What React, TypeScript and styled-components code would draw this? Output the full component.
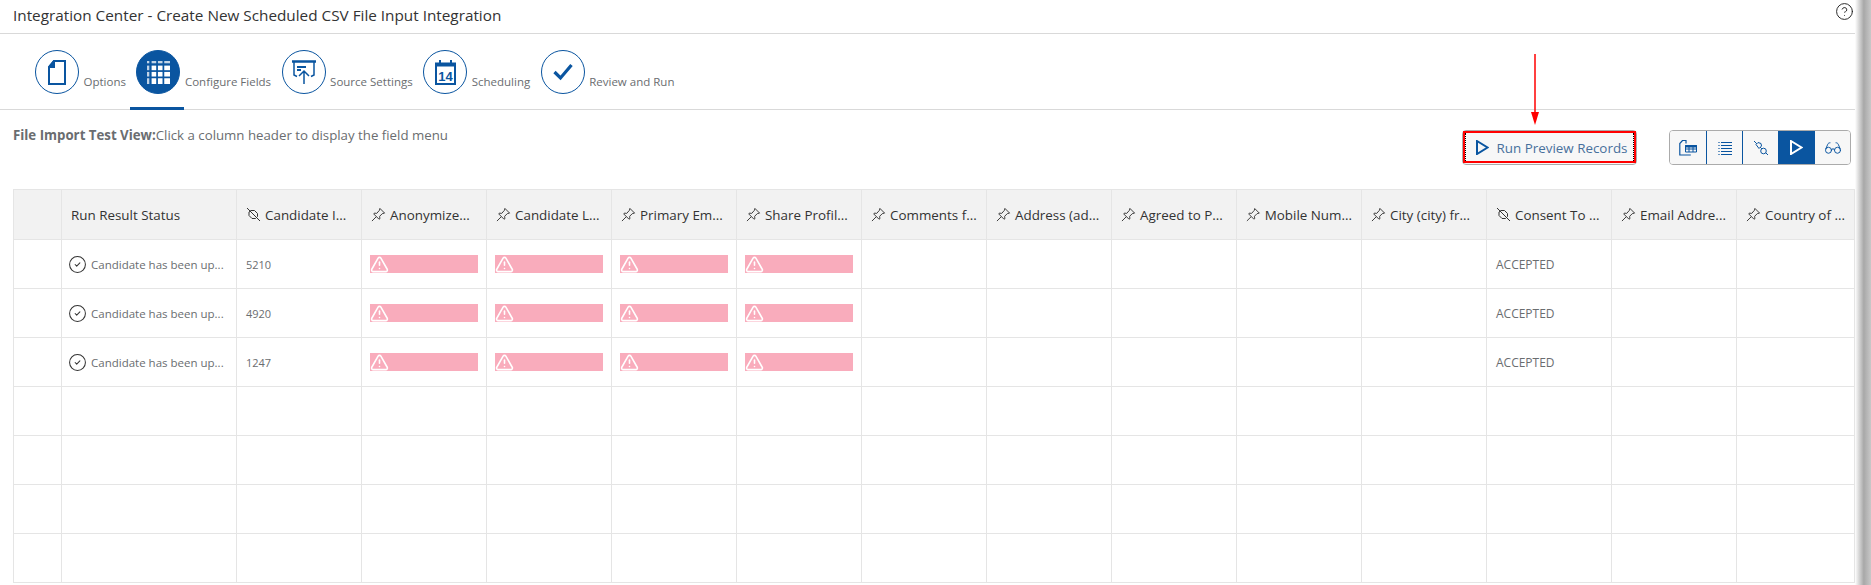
import React from 'react';
import styled, { createGlobalStyle } from 'styled-components';
import { CircleCheck, CircleHelp, Glasses, TriangleAlert } from 'lucide-react';

const FONT = '"Open Sans", "Liberation Sans", sans-serif';
const BLUE = '#0a55a0';
const GRID = '#e5e5e5';

const GlobalStyle = createGlobalStyle`
  html, body {
    margin: 0;
    height: 100%;
    overflow: hidden;
    background: #fff;
    font-family: ${FONT};
  }
`;

const Page = styled.div`
  position: relative;
  width: 1871px;
  height: 585px;
  overflow: hidden;
`;

const TitleBar = styled.header`
  box-sizing: border-box;
  height: 34px;
  padding: 0 15px 0 13px;
  display: flex;
  align-items: center;
  justify-content: space-between;
  border-bottom: 1px solid #d9d9d9;
`;

const Title = styled.h1`
  margin: 0 0 4px;
  font-size: 15.3px;
  font-weight: 400;
  color: #333;
`;

const HelpButton = styled.span`
  display: flex;
  color: #222;
  margin: 0 2px 10px 0;
`;

const Tabs = styled.nav`
  box-sizing: border-box;
  height: 76px;
  padding: 16px 0 0 35px;
  display: flex;
  gap: 10.5px;
  border-bottom: 1px solid #d9d9d9;
`;

const Tab = styled.div<{ $active?: boolean }>`
  position: relative;
  display: flex;
  align-items: flex-start;
  gap: 4.5px;
  height: 44px;

  ${(p) =>
    p.$active &&
    `
    &::after {
      content: '';
      position: absolute;
      left: -6px;
      width: 54px;
      top: 57px;
      height: 3px;
      background: ${BLUE};
    }
  `}
`;

const TabCircle = styled.span<{ $active?: boolean }>`
  box-sizing: border-box;
  width: 44px;
  height: 44px;
  border-radius: 50%;
  border: 1px solid ${BLUE};
  background: ${(p) => (p.$active ? BLUE : '#fff')};
  color: ${(p) => (p.$active ? '#fff' : BLUE)};
  display: flex;
  align-items: center;
  justify-content: center;
`;

const TabLabel = styled.span`
  margin-top: 24px;
  font-size: 11.5px;
  line-height: 16px;
  color: #6a6d70;
  white-space: nowrap;
`;

const Toolbar = styled.div`
  box-sizing: border-box;
  height: 79px;
  padding: 16px 20px 0 13px;
  display: flex;
  justify-content: space-between;
`;

const Hint = styled.p`
  margin: 0;
  font-size: 13.25px;
  line-height: 18px;
  color: #6a6d70;

  b {
    font-weight: 700;
  }
`;

const Actions = styled.div`
  display: flex;
  gap: 32px;
  margin-top: 4px;
  height: 35px;
`;

const RunButton = styled.button`
  position: relative;
  box-sizing: border-box;
  width: 175px;
  height: 35px;
  display: flex;
  align-items: center;
  justify-content: center;
  gap: 8px;
  padding: 0 0 0 4px;
  border: 1px solid #ababab;
  border-radius: 4px;
  background: #f7f7f7;
  color: #47709c;
  font-family: inherit;
  font-size: 13.4px;

  /* red annotation frame drawn on top of the screenshot */
  &::before {
    content: '';
    position: absolute;
    inset: 0 0 1px 0;
    border: 2px solid #f00;
  }

  /* focus dots, only visible at the button sides */
  &::after {
    content: '';
    position: absolute;
    top: 2px;
    bottom: 3px;
    left: 2px;
    right: 2px;
    border-left: 1px dotted #000;
    border-right: 1px dotted #000;
  }
`;

const Arrow = styled.svg`
  position: absolute;
  left: 66px;
  bottom: 38px;
`;

const Segments = styled.div`
  display: flex;
  height: 35px;
  box-sizing: border-box;
  border: 1px solid #ababab;
  border-radius: 4px;
  overflow: hidden;
`;

const Segment = styled.span<{ $active?: boolean }>`
  box-sizing: border-box;
  width: 36px;
  display: flex;
  align-items: center;
  justify-content: center;
  background: ${(p) => (p.$active ? BLUE : '#f7f7f7')};
  color: ${(p) => (p.$active ? '#fff' : BLUE)};

  & + & {
    border-left: 1px solid ${(p) => (p.$active ? BLUE : '#ababab')};
  }
`;

const TableWrap = styled.div`
  padding-left: 13px;
  width: 1841px;
`;

const Table = styled.table`
  width: 1841px;
  table-layout: fixed;
  border-collapse: collapse;
  font-size: 11px;
  color: #6a6d70;

  th, td {
    box-sizing: border-box;
    border: 1px solid ${GRID};
    padding: 0 9px;
    overflow: hidden;
    white-space: nowrap;
  }
`;

const HeadRow = styled.tr`
  height: 50px;
  background: #f2f2f2;
`;

const BodyRow = styled.tr`
  height: 49px;
`;

const HeadCell = styled.th`
  font-size: 13.4px;
  font-weight: 400;
  color: #333;
  text-align: left;
`;

const HeadInner = styled.span`
  display: flex;
  align-items: center;
  gap: 4px;
`;

const StatusCell = styled.span`
  display: flex;
  align-items: center;
  gap: 4px;
  margin-left: -3px;
  font-size: 11.5px;
`;

const ValueText = styled.span`
  font-size: 12px;
`;

const ErrorBar = styled.div`
  height: 18px;
  margin: 0 -1px;
  background: #f9acbc;
  color: #fff;
  display: flex;
  align-items: center;

  svg {
    flex-shrink: 0;
  }
`;

const EdgeShadow = styled.div`
  position: absolute;
  top: 0;
  right: 0;
  bottom: 0;
  width: 16px;
  background: linear-gradient(to right, #fff, #a8a8a8 55%, #c8c8c8);
`;

const PinIcon = () => (
  <svg width="15" height="15" viewBox="0 0 16 16" fill="none" stroke="#333" strokeWidth="1">
    <path d="M9.5 1.5l5 5-2.5.6-2.8 2.8.3 2.6-1 .5-5.5-5.5.5-1 2.6.3L9 3.5z" />
    <path d="M5.5 10.5L1 15" />
  </svg>
);

const UnpinIcon = () => (
  <svg width="15" height="15" viewBox="0 0 15 15" fill="none" stroke="#333" strokeWidth="1">
    <path d="M1 1l13 13" />
    <path d="M5 3.5h3.5l3 3v3l-2 2H6l-3-3V5z" />
  </svg>
);

const PlayIcon = ({ color }: { color: string }) => (
  <svg width="13" height="15" viewBox="0 0 13 15">
    <path d="M1 1l10.5 6.5L1 14z" fill="none" stroke={color} strokeWidth="2" />
  </svg>
);

const DocumentIcon = () => (
  <svg width="18" height="25" viewBox="0 0 18 25" fill="none" stroke="currentColor" strokeWidth="2">
    <path d="M6 1h11v23H1V7z" />
    <path d="M6 1v6H1z" fill="currentColor" />
  </svg>
);

const TABLE_COLS = [
  { x: 0, w: 2 },
  { x: 4, w: 4 },
  { x: 9.5, w: 4 },
  { x: 15, w: 5 },
];

const TABLE_ROWS = [
  { y: 0, h: 2 },
  { y: 4, h: 4 },
  { y: 9.5, h: 4 },
  { y: 15, h: 5 },
];

const TableIcon = () => (
  <svg width="23" height="23" viewBox="0 0 20 20" fill="currentColor">
    {TABLE_ROWS.flatMap((r) =>
      TABLE_COLS.map((c) => (
        <rect
          key={`${r.y}-${c.x}`}
          x={c.x}
          y={r.y}
          width={c.w}
          height={r.h}
          opacity={r.y === 0 || c.x === 0 ? 0.75 : 1}
        />
      )),
    )}
  </svg>
);

const UploadIcon = () => (
  <svg width="24" height="24" viewBox="0 0 24 24" fill="none" stroke="currentColor" strokeWidth="1.5">
    <path d="M0 1.5h24" strokeWidth="2.5" />
    <path d="M2 2v13l3 1.5M22 2v13l-3 1.5" />
    <path d="M5 7h9M5 10h4" strokeWidth="1.8" />
    <path d="M12 24V11M7 16l5-5 5 5" />
  </svg>
);

const CalendarIcon = () => (
  <svg width="21" height="25" viewBox="0 0 21 25">
    <path d="M1 3.5h19V24H1z" fill="none" stroke="currentColor" strokeWidth="2" />
    <path d="M1 3h19v3.5H1zM4 0h2v5H4zM15 0h2v5h-2z" fill="currentColor" />
    <text x="10.5" y="21" textAnchor="middle" fontSize="13" fontWeight="700" fontFamily="Liberation Sans, sans-serif" fill="currentColor">
      14
    </text>
  </svg>
);

const CheckIcon = () => (
  <svg width="20" height="18" viewBox="0 0 20 18" fill="none" stroke="currentColor" strokeWidth="3.2">
    <path d="M1.5 9l6 6L18.5 2" />
  </svg>
);

const FileTableIcon = () => (
  <svg width="18" height="16" viewBox="0 0 18 16" fill="none" stroke="currentColor" strokeWidth="1">
    <path d="M7 3.5V.5H3.5L.8 3.5V15h11" strokeWidth="1.2" />
    <path d="M6.5 5.5h11V12h-11zM6.500 9h11M10 5.500V12M14 5.500V12" />
    <path d="M6.5 5.5h11V7h-11z" fill="currentColor" />
  </svg>
);

const ListIcon = () => (
  <svg width="14" height="14" viewBox="0 0 14 14" stroke="currentColor" strokeWidth="1">
    {[1, 4, 7, 10, 13].map((y) => (
      <g key={y}>
        <path d={`M0 ${y + 0.5}h2`} opacity="0.6" />
        <path d={`M3 ${y + 0.5}h11`} />
      </g>
    ))}
  </svg>
);

const PlugIcon = () => (
  <svg width="16" height="16" viewBox="0 0 16 16" fill="none" stroke="currentColor" strokeWidth="1">
    <path d="M1 1l14 14" />
    <path d="M3 4.5l2-2 3 1 .5 2.5L6 8.5z" fill="#f7f7f7" />
    <circle cx="10.5" cy="11" r="2.8" fill="#f7f7f7" />
  </svg>
);

const TAB_ITEMS = [
  { label: 'Options', icon: <DocumentIcon /> },
  { label: 'Configure Fields', icon: <TableIcon />, active: true },
  { label: 'Source Settings', icon: <UploadIcon /> },
  { label: 'Scheduling', icon: <CalendarIcon /> },
  { label: 'Review and Run', icon: <CheckIcon /> },
];

const COLUMNS = [
  { title: 'Candidate I...', pinned: false },
  { title: 'Anonymize...', pinned: true, error: true },
  { title: 'Candidate L...', pinned: true, error: true },
  { title: 'Primary Em...', pinned: true, error: true },
  { title: 'Share Profil...', pinned: true, error: true },
  { title: 'Comments f...', pinned: true },
  { title: 'Address (ad...', pinned: true },
  { title: 'Agreed to P...', pinned: true },
  { title: 'Mobile Num...', pinned: true },
  { title: 'City (city) fr...', pinned: true },
  { title: 'Consent To ...', pinned: false, text: 'ACCEPTED' },
  { title: 'Email Addre...', pinned: true },
  { title: 'Country of ...', pinned: true, width: 118 },
];

const ROWS = ['5210', '4920', '1247', null, null, null, null];

const App = () => (
  <Page>
    <GlobalStyle />
    <TitleBar>
      <Title>Integration Center - Create New Scheduled CSV File Input Integration</Title>
      <HelpButton>
        <CircleHelp size={19} strokeWidth={1.2} />
      </HelpButton>
    </TitleBar>

    <Tabs>
      {TAB_ITEMS.map((t) => (
        <Tab key={t.label} $active={t.active}>
          <TabCircle $active={t.active}>{t.icon}</TabCircle>
          <TabLabel>{t.label}</TabLabel>
        </Tab>
      ))}
    </Tabs>

    <Toolbar>
      <Hint>
        <b>File Import Test View:</b>Click a column header to display the field menu
      </Hint>
      <Actions>
        <RunButton>
          <Arrow width="12" height="72" viewBox="0 0 12 72">
            <path d="M6 0v60" stroke="#f00" strokeWidth="1.5" />
            <path d="M2 58h8l-4 13z" fill="#f00" />
          </Arrow>
          <PlayIcon color={BLUE} />
          Run Preview Records
        </RunButton>
        <Segments>
          <Segment><FileTableIcon /></Segment>
          <Segment><ListIcon /></Segment>
          <Segment><PlugIcon /></Segment>
          <Segment $active><PlayIcon color="#fff" /></Segment>
          <Segment><Glasses size={18} strokeWidth={1.3} /></Segment>
        </Segments>
      </Actions>
    </Toolbar>

    <TableWrap>
      <Table>
        <colgroup>
          <col width={48} />
          <col width={175} />
          {COLUMNS.map((c) => (
            <col key={c.title} width={c.width ?? 125} />
          ))}
        </colgroup>
        <thead>
          <HeadRow>
            <HeadCell />
            <HeadCell>Run Result Status</HeadCell>
            {COLUMNS.map((c) => (
              <HeadCell key={c.title}>
                <HeadInner>
                  {c.pinned ? <PinIcon /> : <UnpinIcon />}
                  {c.title}
                </HeadInner>
              </HeadCell>
            ))}
          </HeadRow>
        </thead>
        <tbody>
          {ROWS.map((id, i) => (
            <BodyRow key={i}>
              <td />
              <td>
                {id && (
                  <StatusCell>
                    <CircleCheck size={19} strokeWidth={1.3} color="#333" />
                    Candidate has been up...
                  </StatusCell>
                )}
              </td>
              {COLUMNS.map((c, j) => (
                <td key={c.title}>
                  {id && j === 0 && id}
                  {id && c.text && <ValueText>{c.text}</ValueText>}
                  {id && c.error && (
                    <ErrorBar>
                      <TriangleAlert size={19} strokeWidth={2} />
                    </ErrorBar>
                  )}
                </td>
              ))}
            </BodyRow>
          ))}
        </tbody>
      </Table>
    </TableWrap>

    {/* Edge of the scrolled pane, it casts a soft shadow over the table */}
    <EdgeShadow />
  </Page>
);

export default App;
